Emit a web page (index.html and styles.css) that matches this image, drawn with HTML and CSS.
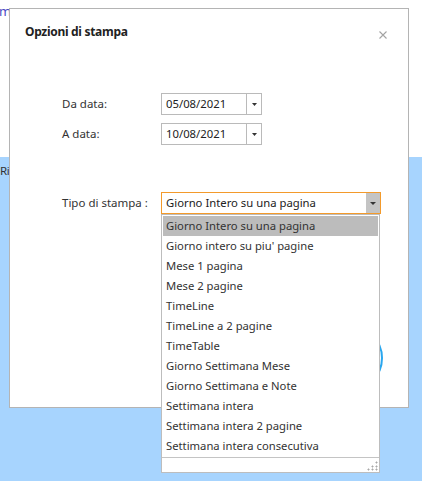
FILE: index.html
```html
<!DOCTYPE html>
<html lang="it">
<head>
<meta charset="utf-8">
<title>Opzioni di stampa</title>
<link rel="stylesheet" href="styles.css">
</head>
<body>
<div class="page">
  <div class="page-top"><span class="bg-link">m</span></div>
  <div class="page-bottom"><span class="bg-text">Riu</span></div>

  <div class="dialog">
    <div class="dlg-header">
      <h1 class="dlg-title">Opzioni di stampa</h1>
      <span class="dlg-close">
        <svg width="8" height="8" viewBox="0 0 8 8"><path d="M0.5 0.5L7.5 7.5M7.5 0.5L0.5 7.5" stroke="#a3a3a3" stroke-width="1.1" fill="none"/></svg>
      </span>
    </div>

    <div class="form">
      <div class="form-row">
        <span class="label">Da data:</span>
        <div class="date-box">
          <span class="field-text">05/08/2021</span>
          <span class="date-btn"><svg width="5" height="3" viewBox="0 0 5 3"><polygon points="0,0 5,0 2.5,3" fill="#333"/></svg></span>
        </div>
      </div>
      <div class="form-row">
        <span class="label">A data:</span>
        <div class="date-box">
          <span class="field-text">10/08/2021</span>
          <span class="date-btn"><svg width="5" height="3" viewBox="0 0 5 3"><polygon points="0,0 5,0 2.5,3" fill="#333"/></svg></span>
        </div>
      </div>
      <div class="form-row type-row">
        <span class="label">Tipo di stampa :</span>
        <div class="select">
          <span class="field-text">Giorno Intero su una pagina</span>
          <span class="select-btn"><svg width="6" height="3" viewBox="0 0 6 3"><polygon points="0,0 6,0 3,3" fill="#333"/></svg></span>
          <div class="listbox">
            <div class="list-items">
              <div class="opt sel">Giorno Intero su una pagina</div>
              <div class="opt">Giorno intero su piu' pagine</div>
              <div class="opt">Mese 1 pagina</div>
              <div class="opt">Mese 2 pagine</div>
              <div class="opt">TimeLine</div>
              <div class="opt">TimeLine a 2 pagine</div>
              <div class="opt">TimeTable</div>
              <div class="opt">Giorno Settimana Mese</div>
              <div class="opt">Giorno Settimana e Note</div>
              <div class="opt">Settimana intera</div>
              <div class="opt">Settimana intera 2 pagine</div>
              <div class="opt">Settimana intera consecutiva</div>
            </div>
            <div class="list-footer">
              <svg class="grip" width="11" height="10" viewBox="0 0 11 10">
                <g fill="#a8a8a8">
                  <rect x="9" y="1" width="1" height="1"/>
                  <rect x="5" y="5" width="1" height="1"/><rect x="9" y="5" width="1" height="1"/>
                  <rect x="1" y="8" width="1" height="1"/><rect x="5" y="8" width="1" height="1"/><rect x="9" y="8" width="1" height="1"/>
                </g>
                <g fill="#d2d2d2">
                  <rect x="8" y="1" width="1" height="1"/><rect x="10" y="1" width="1" height="1"/><rect x="9" y="0" width="1" height="1"/><rect x="9" y="2" width="1" height="1"/>
                  <rect x="4" y="5" width="1" height="1"/><rect x="6" y="5" width="1" height="1"/><rect x="5" y="4" width="1" height="1"/><rect x="5" y="6" width="1" height="1"/>
                  <rect x="8" y="5" width="1" height="1"/><rect x="10" y="5" width="1" height="1"/><rect x="9" y="4" width="1" height="1"/><rect x="9" y="6" width="1" height="1"/>
                  <rect x="0" y="8" width="1" height="1"/><rect x="2" y="8" width="1" height="1"/><rect x="1" y="7" width="1" height="1"/><rect x="1" y="9" width="1" height="1"/>
                  <rect x="4" y="8" width="1" height="1"/><rect x="6" y="8" width="1" height="1"/><rect x="5" y="7" width="1" height="1"/><rect x="5" y="9" width="1" height="1"/>
                  <rect x="8" y="8" width="1" height="1"/><rect x="10" y="8" width="1" height="1"/><rect x="9" y="7" width="1" height="1"/><rect x="9" y="9" width="1" height="1"/>
                </g>
              </svg>
            </div>
          </div>
        </div>
      </div>
    </div>

    <div class="ring"></div>
  </div>
</div>
</body>
</html>
```

FILE: styles.css
```css
html, body {
  margin: 0;
  padding: 0;
  background: #a7d4fe;
}

.page {
  position: relative;
  width: 422px;
  height: 481px;
  overflow: hidden;
  display: flex;
  flex-direction: column;
  font-family: "Noto Sans", "Open Sans", sans-serif;
}

.page-top {
  height: 157px;
  background: #ffffff;
  padding-top: 3px;
  box-sizing: border-box;
}

.bg-link {
  display: block;
  font-size: 13px;
  line-height: 16px;
  color: #4b4bc4;
  margin-left: -1px;
}

.page-bottom {
  flex: 1;
  background: #a7d4fe;
  padding-top: 6px;
}

.bg-text {
  display: block;
  font-size: 11.5px;
  line-height: 16px;
  letter-spacing: -0.5px;
  color: #333;
}

.dialog {
  position: absolute;
  left: 9px;
  top: 8px;
  width: 400px;
  height: 400px;
  box-sizing: border-box;
  border: 1px solid #b4b4b4;
  background: #ffffff;
}

.dlg-header {
  display: flex;
  justify-content: space-between;
  align-items: flex-start;
  padding: 15px 21px 0 15px;
}

.dlg-title {
  margin: 0;
  font-size: 12px;
  line-height: 16px;
  font-weight: 700;
  letter-spacing: -0.3px;
  color: #222;
}

.dlg-close {
  display: block;
  width: 8px;
  height: 8px;
  margin-top: 7px;
}

.dlg-close svg {
  display: block;
}

.form {
  margin-top: 53px;
  padding-left: 52px;
  display: flex;
  flex-direction: column;
  gap: 8px;
}

.form-row {
  display: flex;
  align-items: center;
}

.type-row {
  margin-top: 39px;
}

.label {
  width: 99px;
  font-size: 11.5px;
  line-height: 16px;
  color: #333;
}

.date-box {
  display: flex;
  width: 101px;
  height: 22px;
  box-sizing: border-box;
  border: 1px solid #bababa;
}

.field-text {
  flex: 1;
  padding-left: 4px;
  font-size: 11.3px;
  line-height: 20px;
  color: #222;
  white-space: nowrap;
}

.date-btn {
  width: 14px;
  border-left: 1px solid #bababa;
  display: flex;
  align-items: center;
  justify-content: center;
}

.date-btn svg,
.select-btn svg {
  display: block;
}

.select {
  position: relative;
  display: flex;
  width: 220px;
  height: 22px;
  box-sizing: border-box;
  border: 1px solid #f39a2b;
}

.select-btn {
  width: 14px;
  background: #c4c4c4;
  display: flex;
  align-items: center;
  justify-content: center;
}

.listbox {
  position: absolute;
  z-index: 5;
  left: -1px;
  top: calc(100% + 1px);
  width: 219px;
  box-sizing: border-box;
  border: 1px solid #bdbdbd;
  background: #ffffff;
}

.list-items {
  padding: 1px;
}

.opt {
  height: 20px;
  line-height: 20px;
  padding-left: 3px;
  font-size: 11.25px;
  color: #333;
  white-space: nowrap;
}

.opt.sel {
  background: #bcbcbc;
}

.list-footer {
  height: 14px;
  border-top: 1px solid #c4c4c4;
  display: flex;
  justify-content: flex-end;
  align-items: flex-end;
  padding-right: 1px;
}

.grip {
  display: block;
  margin-bottom: 1px;
}

.ring {
  position: absolute;
  z-index: 1;
  left: 307px;
  top: 316px;
  width: 66px;
  height: 66px;
  box-sizing: border-box;
  border: 2px solid #2aa7ef;
  border-radius: 50%;
}
```
